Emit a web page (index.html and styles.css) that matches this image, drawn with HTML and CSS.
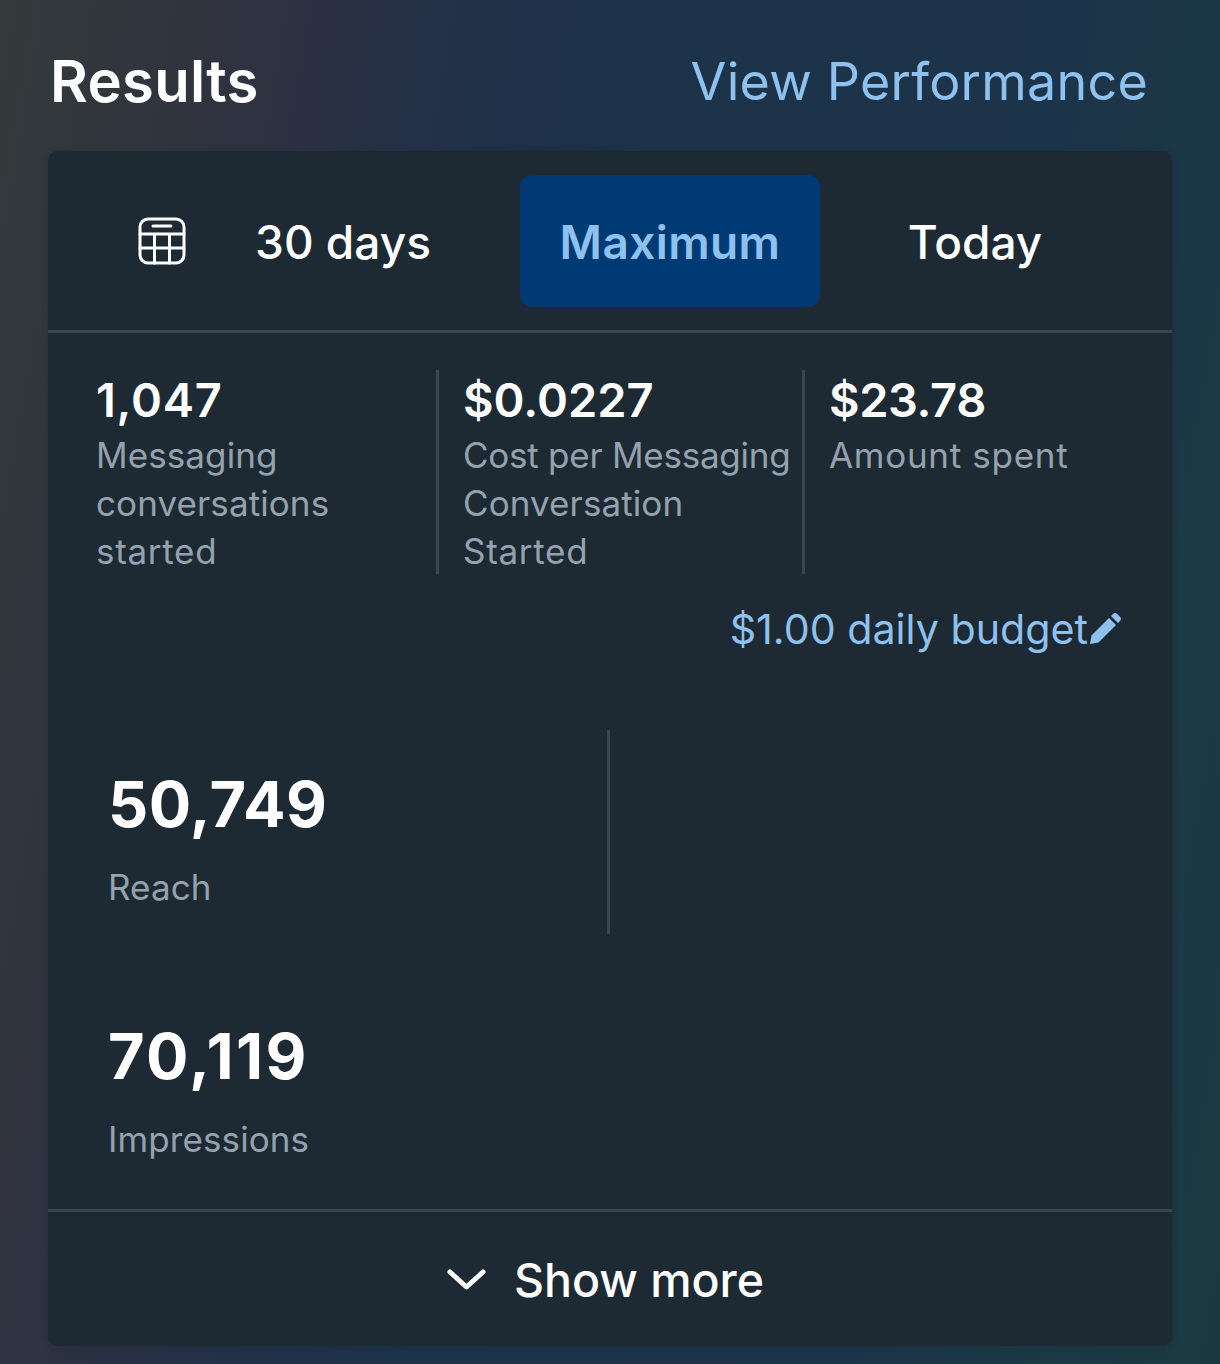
FILE: index.html
```html
<!DOCTYPE html>
<html lang="en">
<head>
<meta charset="utf-8">
<title>Results</title>
<link rel="stylesheet" href="styles.css">
</head>
<body>
<main class="page">
  <header class="top">
    <h1 class="title">Results</h1>
    <a class="view">View Performance</a>
  </header>
  <section class="card">
    <div class="tabs">
      <span class="cal">
        <svg width="48" height="48" viewBox="0 0 48 48" fill="none" stroke="#fff" stroke-width="3" stroke-linecap="round">
          <rect x="2" y="2" width="44" height="44" rx="8"/>
          <path d="M2 17h44M2 31h44M16.500 17v29M31.500 17v29"/>
          <path d="M15 9h18"/>
        </svg>
      </span>
      <span class="tab days">30 days</span>
      <span class="tab active">Maximum</span>
      <span class="tab today">Today</span>
    </div>
    <div class="stats">
      <div class="stat first">
        <div class="num">1,047</div>
        <div class="lab">Messaging<br>conversations<br><span class="spread">started</span></div>
      </div>
      <div class="stat second">
        <div class="num">$0.0227</div>
        <div class="lab"><span class="tight">Cost per Messaging</span><br>Conversation<br><span class="spread">Started</span></div>
      </div>
      <div class="stat third">
        <div class="num">$23.78</div>
        <div class="lab"><span class="spread">Amount spent</span></div>
      </div>
    </div>
    <div class="budget">
      <span>$1.00 daily budget</span>
      <svg width="34" height="34" viewBox="0 0 34 34" fill="#8fc1ee">
        <path d="M2 32l1.500-8.500L21 6l7 7-17.500 17.500z"/>
        <path d="M23 4l2-2c1.200-1.200 3-1.200 4.200 0l2.800 2.800c1.200 1.200 1.200 3 0 4.200l-2 2z"/>
      </svg>
    </div>
    <div class="reach-row">
      <div class="metric reach">
        <div class="big">50,749</div>
        <div class="lab">Reach</div>
      </div>
    </div>
    <div class="metric impressions">
      <div class="big">70,119</div>
      <div class="lab">Impressions</div>
    </div>
    <div class="more">
      <svg width="40" height="26" viewBox="0 0 40 26" fill="none" stroke="#fff" stroke-width="5" stroke-linecap="round" stroke-linejoin="round">
        <path d="M4 5l16.500 15L37 5"/>
      </svg>
      <span>Show more</span>
    </div>
  </section>
</main>
</body>
</html>
```
FILE: styles.css
```css
* { box-sizing: border-box; }
html, body { margin: 0; padding: 0; }
body {
  width: 1220px;
  height: 1364px;
  overflow: hidden;
  font-family: Inter, "Noto Sans", sans-serif;
  color: #fff;
  background: linear-gradient(100deg, #343a3b 0, #2f3240 18%, #263147 28%, #1e3149 38%, #1c334a 45%, #1c3449 74%, #1c3946 88%, #1b3a40 100%);
}
.page { padding: 0 48px; }
.top {
  height: 151px;
  display: flex;
  justify-content: space-between;
  align-items: flex-start;
  padding: 48px 24px 0 2px;
}
.title { margin: 0; font-size: 58px; line-height: 66px; font-weight: 600; letter-spacing: .3px; }
.view { font-size: 52px; line-height: 67px; color: #8fc1ee; font-weight: 400; letter-spacing: .25px; }
.card {
  width: 1124px;
  height: 1195px;
  background: #1d2a34;
  border-radius: 10px;
  box-shadow: 0 0 6px rgba(20,30,40,.25);
  display: flex;
  flex-direction: column;
}
.tabs {
  height: 182px;
  flex: none;
  padding: 24px 0 0 90px;
  border-bottom: 3px solid #39454f;
  display: flex;
  align-items: flex-start;
}
.cal { width: 48px; height: 132px; display: flex; align-items: center; }
.tab { height: 132px; display: flex; align-items: center; justify-content: center; font-size: 46px; font-weight: 500; border-radius: 12px; padding-top: 2px; }
.days { width: 334px; padding-right: 20px; }
.active { width: 300px; background: #003a75; color: #8fc1ee; font-weight: 600; letter-spacing: .4px; }
.today { width: 310px; }
.stats { display: flex; margin-top: 37px; height: 204px; flex: none; }
.stat { height: 204px; padding-left: 48px; }
.first { width: 391px; border-right: 3px solid #39454f; }
.second { width: 366px; padding-left: 24px; border-right: 3px solid #39454f; }
.third { padding-left: 24px; }
.num { font-size: 47px; line-height: 60px; font-weight: 600; }
.first .num { letter-spacing: .7px; }
.third .num { letter-spacing: -.4px; }
.lab { font-size: 35px; line-height: 48px; color: #95a2ae; font-weight: 400; padding-top: 1px; letter-spacing: .1px; }
.spread { letter-spacing: .7px; }
.tight { letter-spacing: -.25px; }
.budget {
  margin-top: 29px;
  padding-right: 50px;
  display: flex;
  justify-content: flex-end;
  align-items: center;
  height: 52px;
  color: #8fc1ee;
  font-size: 41.200px;
  flex: none;
}
.reach-row { margin-top: 75px; height: 204px; flex: none; }
.metric { padding-left: 60px; }
.reach { width: 562px; height: 204px; border-right: 3px solid #39454f; padding-top: 38px; }
.big { font-size: 63px; line-height: 72px; font-weight: 700; letter-spacing: .4px; }
.impressions .big { letter-spacing: 2.300px; }
.metric .lab { margin-top: 22px; }
.impressions { padding-top: 86px; height: 278px; flex: none; border-bottom: 3px solid #39454f; }
.more { flex: 1; display: flex; justify-content: center; align-items: center; gap: 28px; font-size: 46.500px; font-weight: 500; padding: 2px 10px 0 0; }
```
